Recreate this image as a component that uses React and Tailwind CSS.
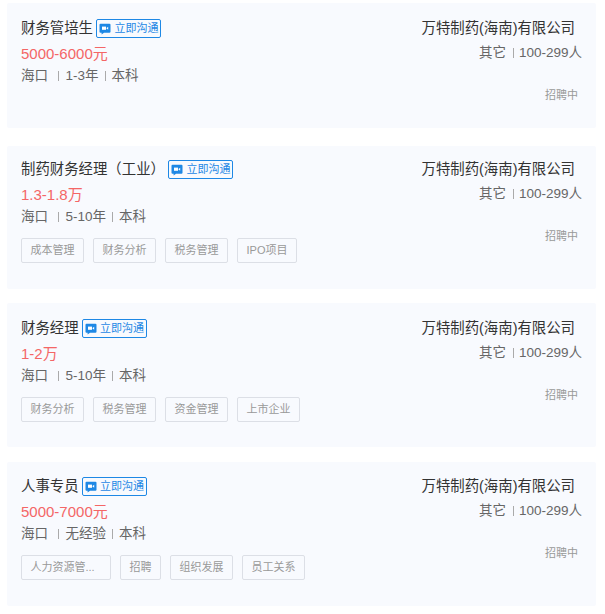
const FONT = "font-['Liberation_Sans','Noto_Sans_CJK_SC',sans-serif]";

const jobs = [
  { title: "财务管培生", salary: "5000-6000元", exp: "1-3年", tags: [], pt: "pt-[16px]", h: "h-[125px]", mt: "mt-[3px]" },
  { title: "制药财务经理（工业）", salary: "1.3-1.8万", exp: "5-10年", tags: ["成本管理", "财务分析", "税务管理", "IPO项目"], pt: "pt-[14px]", h: "h-[143px]", mt: "mt-[18px]" },
  { title: "财务经理", salary: "1-2万", exp: "5-10年", tags: ["财务分析", "税务管理", "资金管理", "上市企业"], pt: "pt-[16px]", h: "h-[144px]", mt: "mt-[14px]" },
  { title: "人事专员", salary: "5000-7000元", exp: "无经验", tags: ["人力资源管...", "招聘", "组织发展", "员工关系"], pt: "pt-[15px]", h: "h-[144px]", mt: "mt-[15px]" },
];

function ChatButton() {
  return (
    <span className="ml-[3.5px] flex h-[19px] w-[65px] items-center justify-center gap-[3px] rounded-[2px] border border-[#1e88e5] text-[11px] text-[#1e88e5]">
      <svg width="12" height="12" viewBox="0 0 12 12" aria-hidden="true">
        <path d="M1.5 .8h9a1 1 0 0 1 1 1v7a1 1 0 0 1-1 1H5L2.6 11.6V9.8H1.5a1 1 0 0 1-1-1v-7a1 1 0 0 1 1-1z" fill="#1e88e5" />
        <rect x="3" y="3.6" width="4" height="3.2" fill="#fff" />
        <path d="M7.5 5 9.2 3.8v3L7.5 5.6z" fill="#fff" />
      </svg>
      立即沟通
    </span>
  );
}

function Divider({ className }) {
  return <span className={`h-[10px] w-px bg-[#aaa] ${className}`} />;
}

function JobCard({ job }) {
  return (
    <div className={`${job.mt} ${job.h} ${job.pt} flex justify-between rounded-[2px] bg-[#f8fafe] pl-[14px] pr-[14px]`}>
      <div>
        <div className="flex h-[19px] items-center text-[14.4px] leading-[19px] text-[#333]">
          {job.title}
          <ChatButton />
        </div>
        <div className="mt-[6px] text-[15px] leading-[20px] text-[#f46666]">{job.salary}</div>
        <div className="mt-[2px] flex h-[20px] items-center text-[13.5px] text-[#666]">
          海口
          <Divider className="ml-[10px] mr-[6.5px]" />
          {job.exp}
          <Divider className="mx-[6px]" />
          本科
        </div>
        {job.tags.length > 0 && (
          <div className="mt-[11px] flex gap-[9px]">
            {job.tags.map((t) => (
              <span key={t} className="flex h-[25px] items-center rounded-[2px] border border-[#dcdfe6] px-[8.5px] text-[11px] text-[#999]">
                {t.endsWith("...") ? <span className="w-[71px]">{t}</span> : t}
              </span>
            ))}
          </div>
        )}
      </div>
      <div className="flex flex-col items-end">
        <div className="mr-[7px] h-[19px] text-[14.4px] leading-[19px] text-[#333]">万特制药(海南)有限公司</div>
        <div className="mt-[5px] flex h-[20px] items-center text-[13.5px] text-[#666]">
          其它
          <Divider className="ml-[7px] mr-[5px]" />
          100-299人
        </div>
        <div className="mr-[4px] mt-[24px] text-[11px] leading-[16px] text-[#999]">招聘中</div>
      </div>
    </div>
  );
}

export default function App() {
  return (
    <div className={`${FONT} h-[614px] w-[605px] overflow-hidden bg-white pl-[7px] pr-[9px]`}>
      {jobs.map((job) => (
        <JobCard key={job.title} job={job} />
      ))}
    </div>
  );
}
